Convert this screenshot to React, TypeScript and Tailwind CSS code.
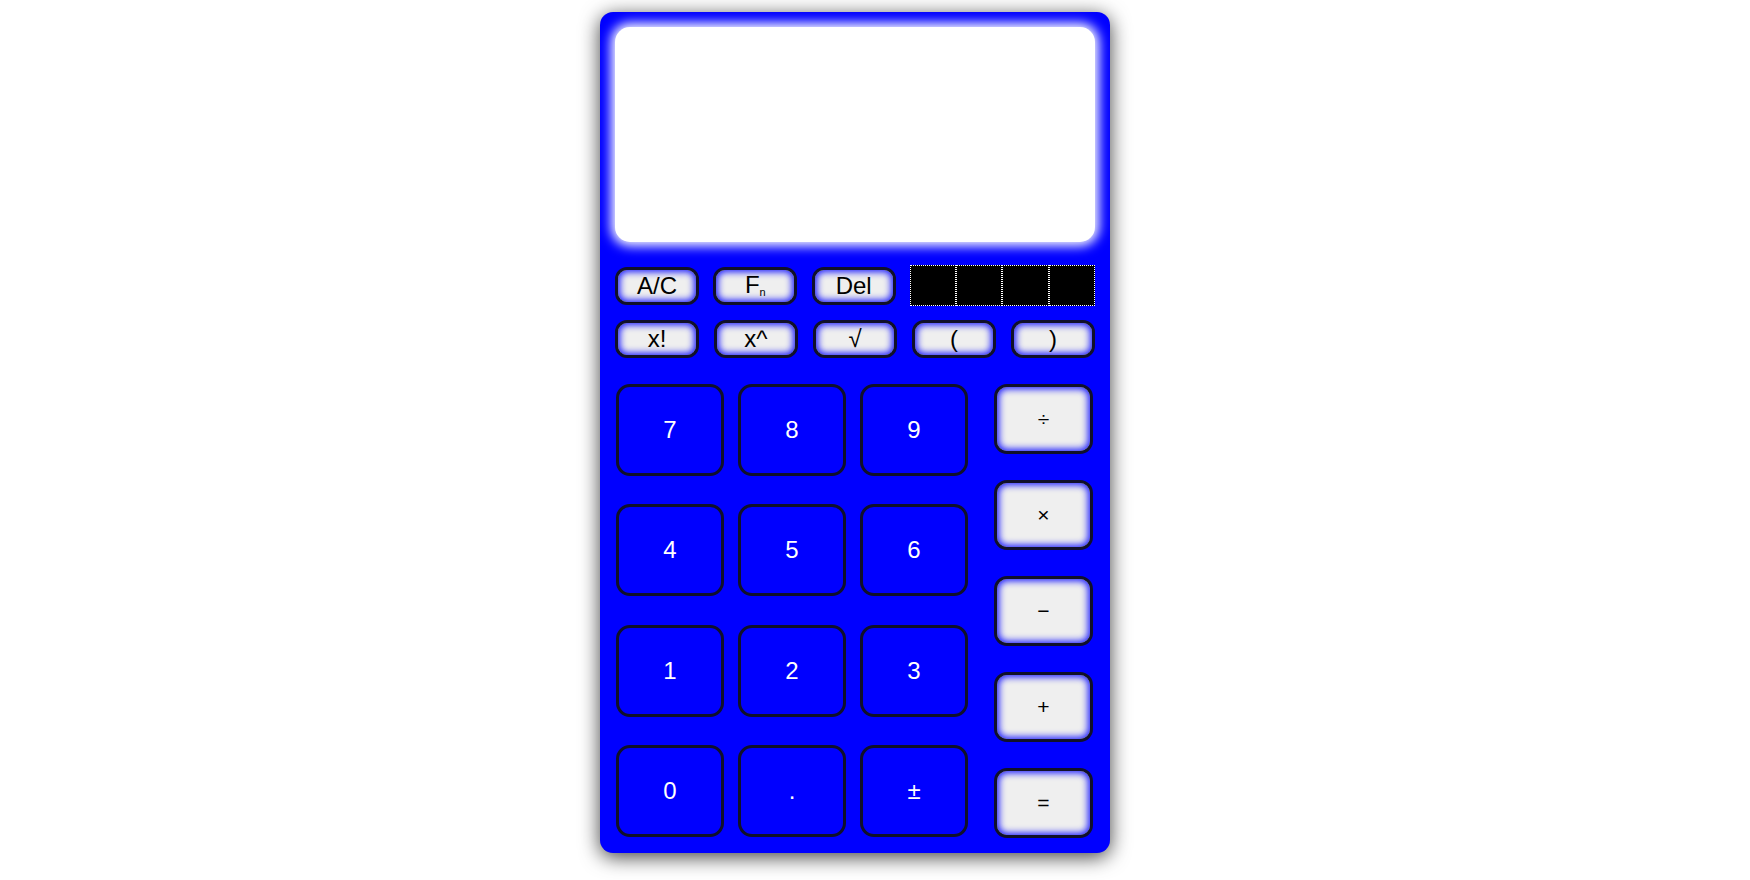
const fnKeys = ["x!", "x^", "√", "(", ")"];
const digits = ["7", "8", "9", "4", "5", "6", "1", "2", "3", "0", ".", "±"];
const ops = ["÷", "×", "−", "+", "="];

function GreyKey({ children }: { children: React.ReactNode }) {
  return (
    <button className="flex h-[38px] w-[84px] items-center justify-center rounded-[12px] border-[3px] border-[#10102a] bg-[#efefef] text-[24px] leading-none text-black shadow-[inset_0_0_7px_2px_#1a1aff]">
      {children}
    </button>
  );
}

export default function App() {
  return (
    <div className="flex min-h-screen justify-center bg-white pr-[40px] pt-[12px] font-['Liberation_Sans',Arial,sans-serif]">
      <div className="flex h-[841px] w-[510px] flex-col rounded-[13px] bg-[#0000ff] p-[15px] shadow-[0_4px_20px_rgba(0,0,0,0.75)]">
        {/* display */}
        <div className="h-[216px] rounded-[15px] bg-white shadow-[0_0_12px_4px_#ffffff]" />

        {/* top row */}
        <div className="mt-[23px] flex h-[41px] items-center justify-between">
          <GreyKey>A/C</GreyKey>
          <GreyKey>
            <span className="pb-[2px]">F</span>
            <span className="mt-[14px] text-[11px]">n</span>
          </GreyKey>
          <GreyKey>Del</GreyKey>
          <div className="grid h-[41px] w-[185px] grid-cols-4 bg-black">
            {[0, 1, 2, 3].map((i) => (
              <div key={i} className="border border-dotted border-white" />
            ))}
          </div>
        </div>

        {/* function row */}
        <div className="mt-[14px] flex justify-between">
          {fnKeys.map((k) => (
            <GreyKey key={k}>{k}</GreyKey>
          ))}
        </div>

        {/* keypad */}
        <div className="mt-[26px] flex justify-between pl-px pr-[2px]">
          <div className="grid grid-cols-[repeat(3,108px)] gap-x-[14px] gap-y-[27.5px]">
            {digits.map((d) => (
              <button
                key={d}
                className="flex h-[92px] items-center justify-center rounded-[14px] border-[3px] border-[#10102a] bg-[#0000ff] text-[24px] text-white"
              >
                {d}
              </button>
            ))}
          </div>
          <div className="flex flex-col gap-[26px]">
            {ops.map((o) => (
              <button
                key={o}
                className="flex h-[70px] w-[99px] items-center justify-center rounded-[13px] border-[3px] border-[#10102a] bg-[#efefef] text-[21px] font-medium text-black shadow-[inset_0_0_7px_2px_#1a1aff]"
              >
                {o}
              </button>
            ))}
          </div>
        </div>
      </div>
    </div>
  );
}
